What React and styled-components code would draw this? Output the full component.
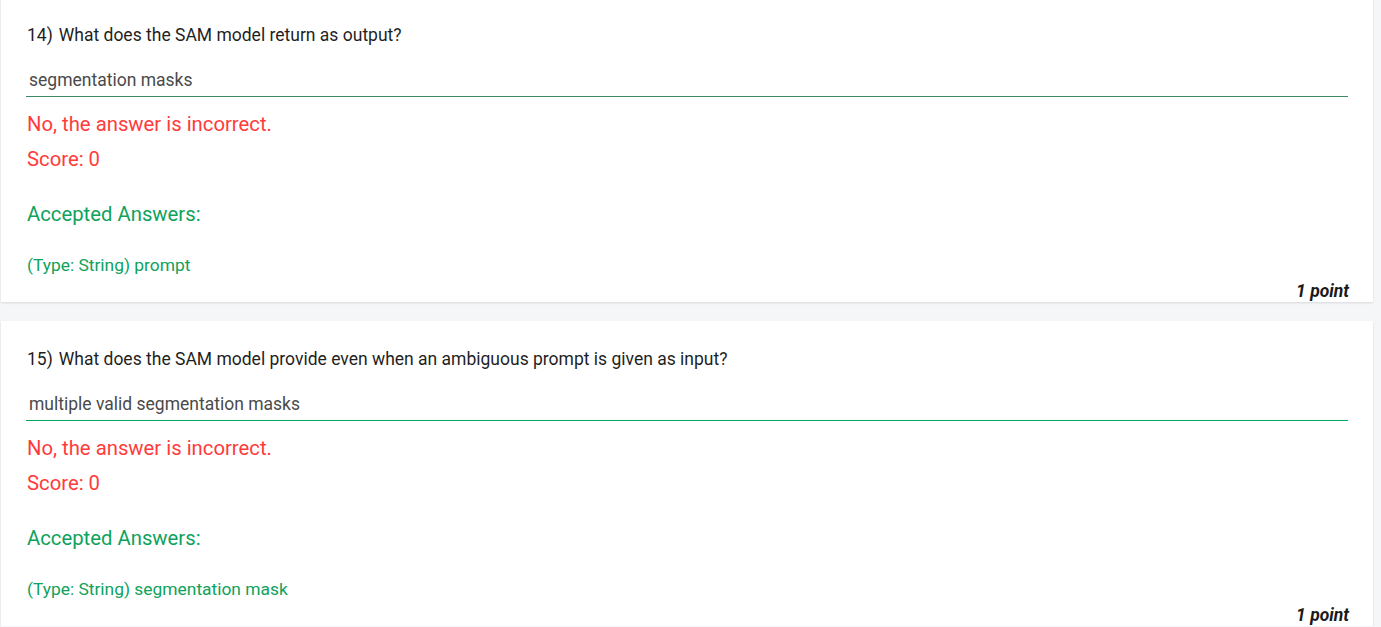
import React from 'react'
import styled, { createGlobalStyle } from 'styled-components'

const Global = createGlobalStyle`
body{
margin:0;
background:#f5f6f8;
font-family:Roboto,"Liberation Sans",sans-serif;
overflow:hidden;
}
`
const Page = styled.div`
margin-top:-3px;
padding-left:1px;
width:1372px;
display:flex;
flex-direction:column;
gap:19px;
`
const Card = styled.div`
background:#fff;
height:305px;
box-sizing:border-box;
padding:26px 25px 0 25px;
box-shadow:0 1px 2px rgba(0,0,0,0.12);
display:flex;
flex-direction:column;
`
const Question = styled.div`
font-size:17.5px;
line-height:24px;
color:#1f1f1f;
padding-left:1px;
`
const Num = styled.span`
margin-right:6px;
`
const Answer = styled.div`
margin-top:21px;
font-size:17.5px;
line-height:24px;
color:#4a4a4a;
padding:0 0 4px 3px;
border-bottom:1px solid ${p => p.line};
`
const Verdict = styled.div`
margin-top:${p => p.gap}px;
font-size:20.3px;
line-height:24px;
color:#ff3b3b;
padding-left:1px;
`
const AcceptedTitle = styled.div`
margin-top:31px;
font-size:20.3px;
line-height:24px;
color:#0ea25c;
padding-left:1px;
`
const AcceptedItem = styled.div`
margin-top:27px;
font-size:17.4px;
line-height:24px;
color:#0ea25c;
padding-left:1px;
`
const Points = styled.div`
margin-top:3px;
align-self:flex-end;
font-size:17.5px;
line-height:22px;
font-weight:700;
font-style:italic;
color:#1a1a1a;
margin-right:-1px;
`

const items = [
  { n: 14, q: 'What does the SAM model return as output?', a: 'segmentation masks', acc: 'prompt', line: '#3a8a62' },
  { n: 15, q: 'What does the SAM model provide even when an ambiguous prompt is given as input?', a: 'multiple valid segmentation masks', acc: 'segmentation mask', line: '#00a95c' },
]

const App = () => {
  return (
    <>
      <Global />
      <Page>
        {items.map(it => (
          <Card key={it.n}>
            <Question><Num>{it.n})</Num>{it.q}</Question>
            <Answer line={it.line}>{it.a}</Answer>
            <Verdict gap={15}>No, the answer is incorrect.</Verdict>
            <Verdict gap={11}>Score: 0</Verdict>
            <AcceptedTitle>Accepted Answers:</AcceptedTitle>
            <AcceptedItem>(Type: String) {it.acc}</AcceptedItem>
            <Points>1 point</Points>
          </Card>
        ))}
      </Page>
    </>
  )
}

export default App
